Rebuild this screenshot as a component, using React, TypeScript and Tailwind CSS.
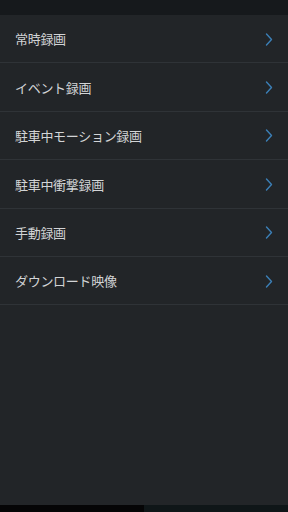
const items = [
  '常時録画',
  'イベント録画',
  '駐車中モーション録画',
  '駐車中衝撃録画',
  '手動録画',
  'ダウンロード映像',
];

const Chevron = () => (
  <svg width="8" height="13" viewBox="0 0 8 13" fill="none">
    <path d="M1.5 1 L6.5 6.5 L1.5 12" stroke="#3b7fb6" strokeWidth="1.4" strokeLinecap="round" strokeLinejoin="round" />
  </svg>
);

export default function App() {
  return (
    <div
      className="w-[288px] h-[512px] bg-[#222528] flex flex-col overflow-hidden"
      style={{ fontFamily: '"Noto Sans CJK JP", "Noto Sans", sans-serif' }}
    >
      <div className="h-[15px] bg-[#16191c] shrink-0" />
      <ul className="flex flex-col">
        {items.map((label) => (
          <li
            key={label}
            className="h-[48.4px] flex items-center justify-between pl-[15px] pr-[15px] pt-[1px] border-b border-[#2f3337]"
          >
            <span className="text-[13px] text-[#d2d4d6] tracking-[-0.3px]">{label}</span>
            <Chevron />
          </li>
        ))}
      </ul>
      <div className="flex-1" />
      <div className="h-[7px] flex shrink-0">
        <div className="w-[144px] bg-[#050506]" />
        <div className="flex-1 bg-[#0f1618]" />
      </div>
    </div>
  );
}
